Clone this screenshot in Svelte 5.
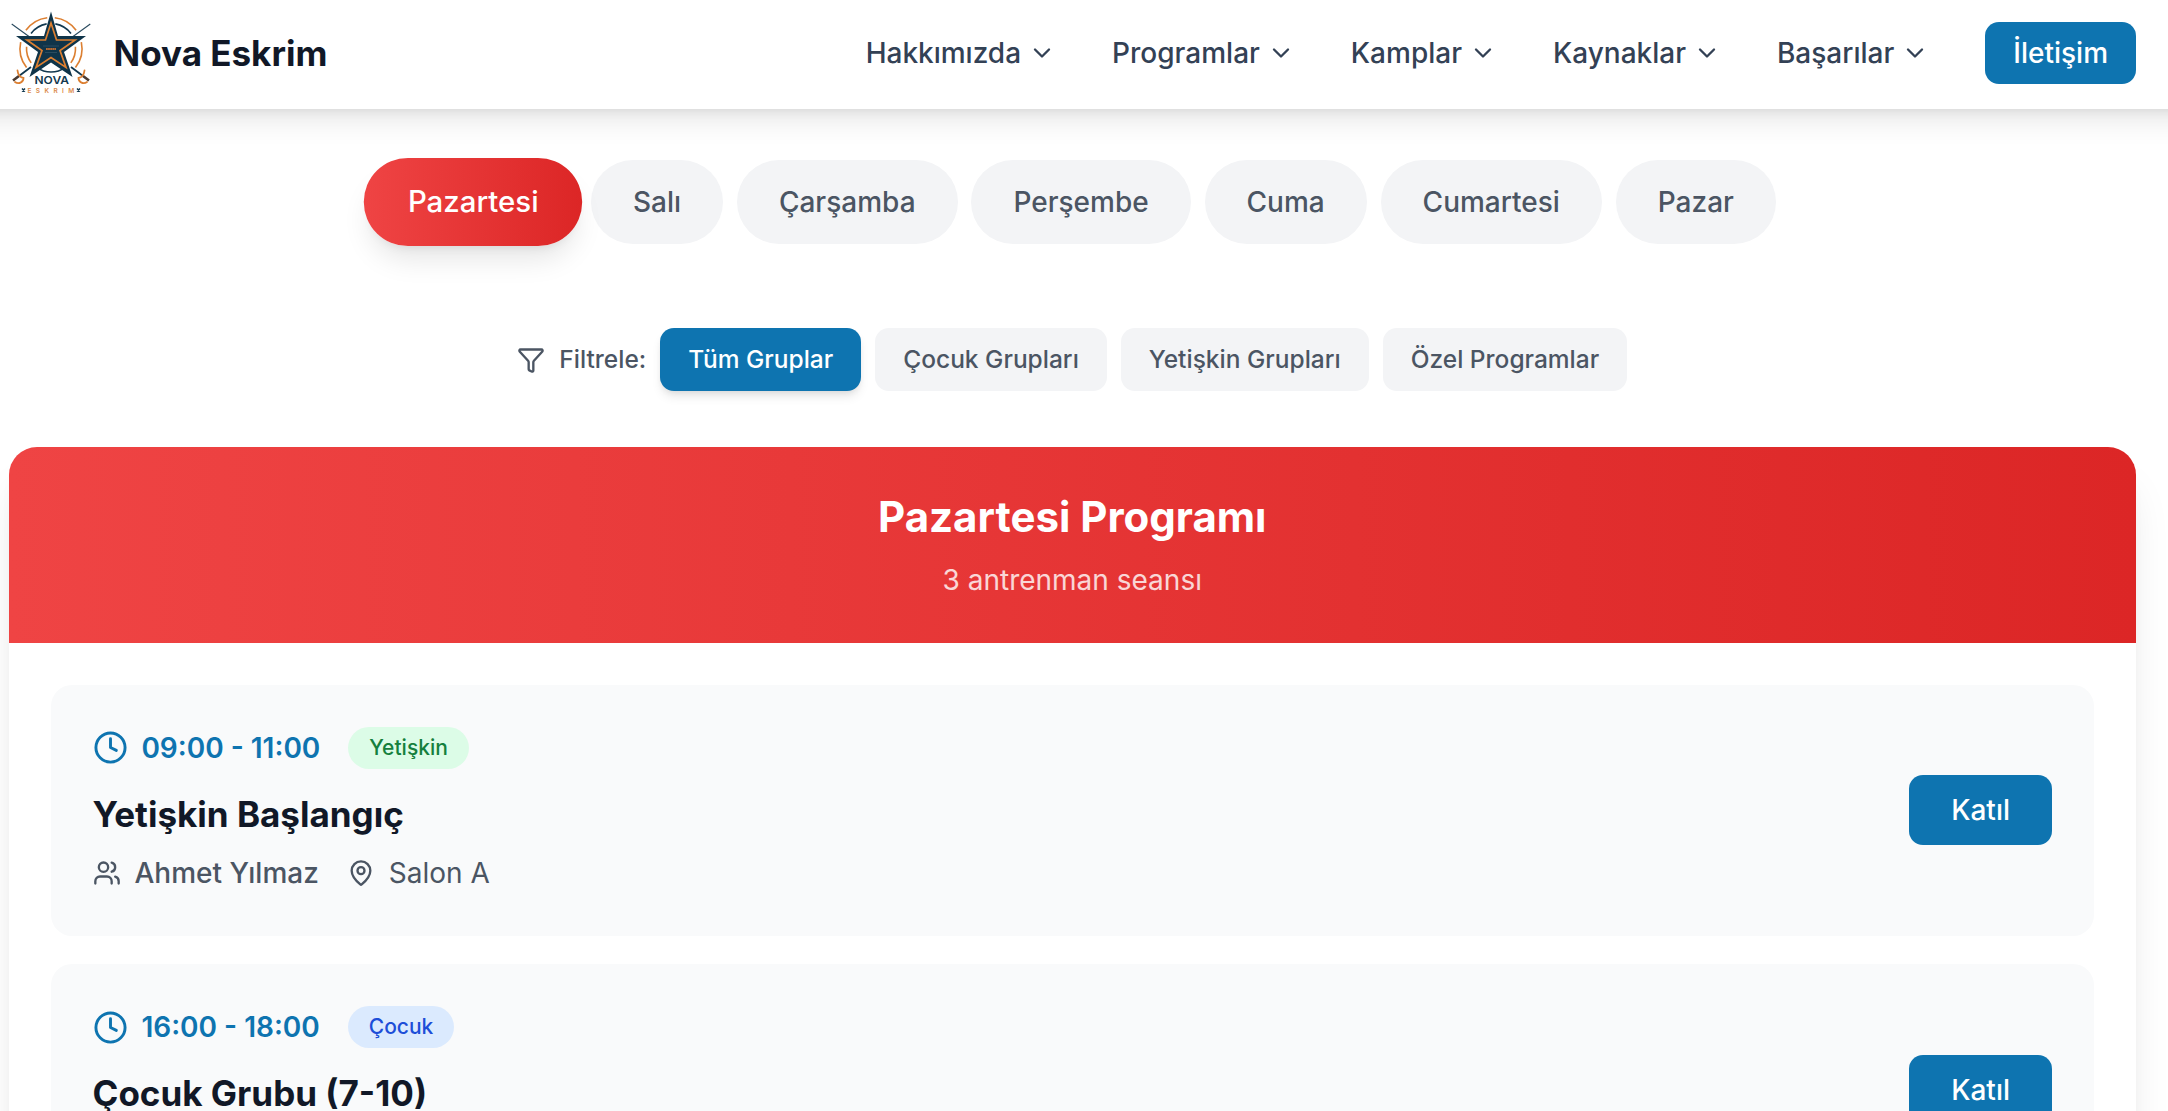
<script>
  const nav = ['Hakkımızda', 'Programlar', 'Kamplar', 'Kaynaklar', 'Başarılar'];
  const days = ['Pazartesi', 'Salı', 'Çarşamba', 'Perşembe', 'Cuma', 'Cumartesi', 'Pazar'];
  const filters = ['Tüm Gruplar', 'Çocuk Grupları', 'Yetişkin Grupları', 'Özel Programlar'];
  const sessionCount = 3;
  const sessions = [
    { time: '09:00 - 11:00', group: 'Yetişkin', tone: 'green', title: 'Yetişkin Başlangıç', coach: 'Ahmet Yılmaz', room: 'Salon A' },
    { time: '16:00 - 18:00', group: 'Çocuk', tone: 'blue', title: 'Çocuk Grubu (7-10)' }
  ];
  let activeDay = $state('Pazartesi');
  let activeFilter = $state('Tüm Gruplar');

  // Circular arc around the emblem's centre, angles in degrees, clockwise from the right.
  function arc(r, from, to) {
    const point = (deg) => {
      const a = (deg * Math.PI) / 180;
      return `${(40 + r * Math.cos(a)).toFixed(2)} ${(37.5 + r * Math.sin(a)).toFixed(2)}`;
    };
    return `M${point(from)}A${r} ${r} 0 0 1 ${point(to)}`;
  }
  const orangeArcs = [arc(31, 216, 263), arc(31, 277, 324), arc(31, 142, 192), arc(31, -12, 38), arc(24.5, 144, 184), arc(24.5, -4, 36)].join('');
  const navyArcs = [arc(25, 217, 260), arc(25, 280, 323), arc(23.5, 53, 127)].join('');
</script>

<div class="page">
  <header>
    <div class="brand">
      <svg class="logo" viewBox="0 0 80 84" aria-label="Nova Eskrim">
        <g fill="none">
          <path d={orangeArcs} stroke="#dc7f31" stroke-width="1.6" />
          <path d={navyArcs} stroke="#12384f" stroke-width="1.6" />
          <path d="M.7 13 18 25.500M79.300 13 62 25.500" stroke="#2b4c60" stroke-width="1.100" />
          <path d="M20 56 8 65M60 56 72 65" stroke="#12384f" stroke-width="1.800" />
          <path d="m8 65-6 4.500m70-4.500 6 4.500" stroke="#4a3a31" stroke-width="2.600" />
          <path d="M6.500 59.500c.5 4 3 7 6 7.500 0 4.500-5 6.500-8.500 4M73.500 59.500c-.5 4-3 7-6 7.500 0 4.500 5 6.500 8.500 4" stroke="#dc7f31" stroke-width="1.800" stroke-linecap="round" />
        </g>
        <path d="M40 .5 47 25H75L53 41 61.500 66 40 51.500 18.500 66 27 41 5 25H33Z" fill="#0f3449" />
        <path d="M40 12 45.500 29H64L49 39.500 55 56.500 40 46.500 25 56.500 31 39.500 16 29H34.500Z" fill="none" stroke="#dc7f31" stroke-width="1.700" />
        <path d="M32 35h16M34 41.500h12" stroke="#3d5d6e" stroke-width=".6" />
        <path d="M35 38h10" stroke="#b76a32" stroke-width="2.200" stroke-dasharray="1.800 .3" />
        <text x="23.500" y="72.500" class="mark" textLength="34.500" lengthAdjust="spacingAndGlyphs">NOVA</text>
        <text x="16.500" y="81.700" class="submark">ESKRIM</text>
        <path d="m11 77.500 3 3m0-3-3 3m55-3 3 3m0-3-3 3" stroke="#12384f" stroke-width="1.500" />
      </svg>
      <span>Nova Eskrim</span>
    </div>
    <nav>
      {#each nav as item}
        <a href="#{item}">{item}
          <svg class="icon" viewBox="0 0 24 24"><path d="m6 9 6 6 6-6" /></svg>
        </a>
      {/each}
      <button class="contact">İletişim</button>
    </nav>
  </header>

  <main>
    <div class="days">
      {#each days as day}
        <button class="day" class:active={day === activeDay} onclick={() => (activeDay = day)}>{day}</button>
      {/each}
    </div>

    <div class="filters">
      <div class="filter-label">
        <svg class="icon" viewBox="0 0 24 24"><path d="M10 20a1 1 0 0 0 .553.895l2 1A1 1 0 0 0 14 21v-7a2 2 0 0 1 .517-1.341L21.740 4.670A1 1 0 0 0 21 3H3a1 1 0 0 0-.742 1.670l7.225 7.989A2 2 0 0 1 10 14z" /></svg>
        <span>Filtrele:</span>
      </div>
      {#each filters as filter}
        <button class="filter" class:active={filter === activeFilter} onclick={() => (activeFilter = filter)}>{filter}</button>
      {/each}
    </div>

    <section class="schedule">
      <div class="schedule-head">
        <h2>{activeDay} Programı</h2>
        <p>{sessionCount} antrenman seansı</p>
      </div>
      <div class="sessions">
        {#each sessions as s}
          <article>
            <div>
              <div class="when">
                <svg class="icon clock" viewBox="0 0 24 24"><circle cx="12" cy="12" r="10" /><path d="M12 6v6l4 2" /></svg>
                <span class="time">{s.time}</span>
                <span class="badge {s.tone}">{s.group}</span>
              </div>
              <h3>{s.title}</h3>
              <div class="meta">
                {#if s.coach}
                  <svg class="icon" viewBox="0 0 24 24"><path d="M16 21v-2a4 4 0 0 0-4-4H6a4 4 0 0 0-4 4v2" /><circle cx="9" cy="7" r="4" /><path d="M22 21v-2a4 4 0 0 0-3-3.870M16 3.130a4 4 0 0 1 0 7.750" /></svg>
                  <span class="coach">{s.coach}</span>
                {/if}
                {#if s.room}
                  <svg class="icon pin" viewBox="0 0 24 24"><path d="M20 10c0 4.993-5.539 10.193-7.399 11.799a1 1 0 0 1-1.202 0C9.539 20.193 4 14.993 4 10a8 8 0 0 1 16 0" /><circle cx="12" cy="10" r="3" /></svg>
                  <span>{s.room}</span>
                {/if}
              </div>
            </div>
            <button class="join">Katıl</button>
          </article>
        {/each}
      </div>
    </section>
  </main>
</div>

<style>
  :global(body) { background: #fff; }
  .page {
    height: 1111px;
    overflow: hidden;
    font: 400 28px/42px Inter, sans-serif;
    color: #4b5563;
  }
  button { border: 0; font: inherit; font-weight: 500; cursor: pointer; }
  h2, h3, p { margin: 0; }
  .icon {
    width: 28px;
    height: 28px;
    flex: none;
    fill: none;
    stroke: currentColor;
    stroke-width: 2;
    stroke-linecap: round;
    stroke-linejoin: round;
  }
  /* Runs past both page edges so that its shadow stays even along the full width. */
  header {
    position: relative;
    z-index: 2;
    box-sizing: border-box;
    height: 109px;
    margin: 0 -40px;
    padding: 0 72px 3px 51px;
    display: flex;
    align-items: center;
    justify-content: space-between;
    background: #fff;
    box-shadow: 0 17.5px 26.250px -5.250px rgb(0 0 0 / .1), 0 7px 10.500px -7px rgb(0 0 0 / .1);
  }
  .brand { display: flex; align-items: center; gap: 22.500px; color: #111827; font-size: 35px; font-weight: 700; }
  .logo { width: 80px; height: 84px; }
  .mark { font: 600 11px Inter, sans-serif; fill: #12384f; }
  .submark { font: 600 6.500px Inter, sans-serif; letter-spacing: 4.400px; fill: #dc8a4a; }
  nav { display: flex; align-items: center; gap: 56px; }
  nav a { display: flex; align-items: center; gap: 7px; color: #334155; font-weight: 500; text-decoration: none; }
  .contact { padding: 10px 28px; border-radius: 14px; background: #0e74b0; color: #fff; }
  main { padding: 51px 32px 0 8.500px; }
  .days, .filters { display: flex; justify-content: center; gap: 14px; }
  .days { gap: 13.900px; }
  .day { padding: 21px 42px; border-radius: 42px; background: #f3f4f6; color: #4b5563; }
  .day.active {
    background: linear-gradient(to right, #ef4444, #dc2626);
    color: #fff;
    transform: scale(1.05);
    box-shadow: 0 17.500px 26.250px -5.250px rgb(0 0 0 / .1), 0 7px 10.500px -7px rgb(0 0 0 / .1);
  }
  .filters { margin-top: 84px; font-size: 24.500px; line-height: 35px; align-items: center; }
  .filter-label { display: flex; align-items: center; gap: 14px; font-weight: 500; }
  .filter { padding: 14px 28px; border-radius: 14px; background: #f3f4f6; color: #4b5563; }
  .filter.active { background: #0e74b0; color: #fff; box-shadow: 0 7px 10.500px -2px rgb(0 0 0 / .1), 0 3.500px 7px -3.500px rgb(0 0 0 / .1); }
  .schedule {
    margin-top: 56px;
    border-radius: 28px;
    overflow: hidden;
    background: #fff;
    box-shadow: 0 35px 43.750px -8.750px rgb(0 0 0 / .1), 0 14px 17.500px -10.500px rgb(0 0 0 / .1);
  }
  .schedule-head { padding: 42px; text-align: center; color: #fff; background: linear-gradient(to right, #ef4444, #dc2626); }
  h2 { margin-bottom: 14px; font-size: 42px; line-height: 56px; font-weight: 700; }
  .schedule-head p { opacity: .8; }
  .sessions { padding: 41.500px 42px 42px; display: flex; flex-direction: column; gap: 28px; }
  article { padding: 42px; display: flex; align-items: center; justify-content: space-between; border-radius: 21px; background: #f9fafb; }
  .when { display: flex; align-items: center; margin-bottom: 21px; }
  .clock { width: 35px; height: 35px; margin-right: 13.900px; color: #0e74b0; }
  .time { color: #0e74b0; font-weight: 600; }
  .badge { margin-left: 28px; padding: 7px 21px; border-radius: 21px; font-size: 21px; line-height: 28px; font-weight: 500; }
  .green { background: #dcfce7; color: #15803d; }
  .blue { background: #dbeafe; color: #1d4ed8; }
  h3 { margin-bottom: 13.500px; color: #111827; font-size: 35px; line-height: 49px; font-weight: 700; }
  .meta { display: flex; align-items: center; gap: 14px; min-height: 42px; }
  .coach { font-weight: 500; }
  .pin { margin-left: 14px; }
  .join { padding: 14px 42px; border-radius: 14px; background: #0e74b0; color: #fff; }
</style>
